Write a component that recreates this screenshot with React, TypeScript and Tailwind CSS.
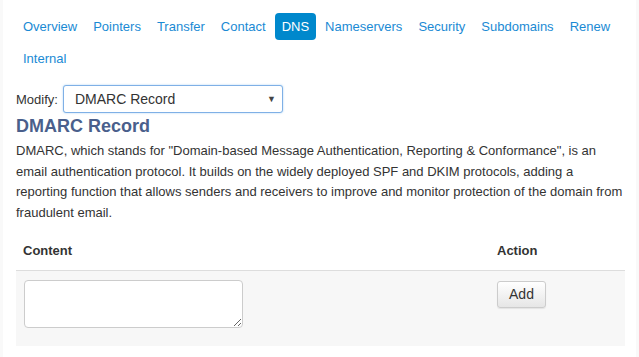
import React, { useState } from 'react';

const tabs = [
  'Overview',
  'Pointers',
  'Transfer',
  'Contact',
  'DNS',
  'Nameservers',
  'Security',
  'Subdomains',
  'Renew',
  'Internal',
];

export default function App() {
  const [active, setActive] = useState('DNS');
  const [record, setRecord] = useState('DMARC Record');

  return (
    <div className="min-h-[357px] bg-[#f9f9f9] px-[3px] font-['Liberation_Sans',Arial,sans-serif] text-[#333]">
      <div className="min-h-[357px] bg-white px-[13px] pt-[13px]">
        {/* tab pills */}
        <ul className="flex flex-wrap gap-x-[2px] gap-y-[5px]">
          {tabs.map((tab) => (
            <li key={tab}>
              <a
                href="#"
                onClick={(e) => {
                  e.preventDefault();
                  setActive(tab);
                }}
                className={[
                  'flex h-[27px] items-center rounded-[4px] px-[7px] text-[13px]',
                  active === tab ? 'bg-[#0088cc] text-white' : 'text-[#1a8ad4]',
                ].join(' ')}
              >
                {tab}
              </a>
            </li>
          ))}
        </ul>

        {/* record picker */}
        <div className="mt-[13px] flex items-center gap-[5px]">
          <label className="text-[13px] leading-none">Modify:</label>
          <div className="relative">
            <select
              value={record}
              onChange={(e) => setRecord(e.target.value)}
              className="h-[28px] w-[220px] appearance-none rounded-[3px] border border-[#7fb0e6] bg-white pl-[11px] text-[14px] text-[#333] shadow-[0_0_2px_rgba(102,175,233,0.6)] outline-none"
            >
              <option>DMARC Record</option>
              <option>SPF Record</option>
              <option>MX Record</option>
            </select>
            <span className="pointer-events-none absolute right-[7px] top-[8px] text-[9px] text-[#444]">▼</span>
          </div>
        </div>

        <h3 className="mt-[2px] text-[18px] font-bold leading-[22px] text-[#4a5f8c]">DMARC Record</h3>
        <p className="mt-[4px] text-[13px] leading-[20.5px]">
          DMARC, which stands for "Domain-based Message Authentication, Reporting &amp; Conformance", is an
          email authentication protocol. It builds on the widely deployed SPF and DKIM protocols, adding a
          reporting function that allows senders and receivers to improve and monitor protection of the domain
          from fraudulent email.
        </p>

        {/* records table */}
        <table className="mt-[9px] w-[609px] border-collapse text-[13px]">
          <thead>
            <tr className="border-b border-[#dddddd]">
              <th className="h-[38px] px-[7px] text-left font-bold">Content</th>
              <th className="w-[135px] px-[7px] text-left font-bold">Action</th>
            </tr>
          </thead>
          <tbody>
            <tr className="bg-[#f7f7f7] align-top">
              <td className="px-[8px] pb-[18px] pt-[9px]">
                <textarea className="block h-[48px] w-[219px] resize rounded-[4px] border border-[#cccccc] bg-white" />
              </td>
              <td className="px-[7px] pt-[10px]">
                <button
                  type="button"
                  className="h-[27px] w-[49px] rounded-[3px] border border-[#cccccc] bg-gradient-to-b from-white to-[#e6e6e6] text-[14px] text-[#333] shadow-[0_1px_1px_rgba(0,0,0,0.08)]"
                >
                  Add
                </button>
              </td>
            </tr>
          </tbody>
        </table>
      </div>
    </div>
  );
}
